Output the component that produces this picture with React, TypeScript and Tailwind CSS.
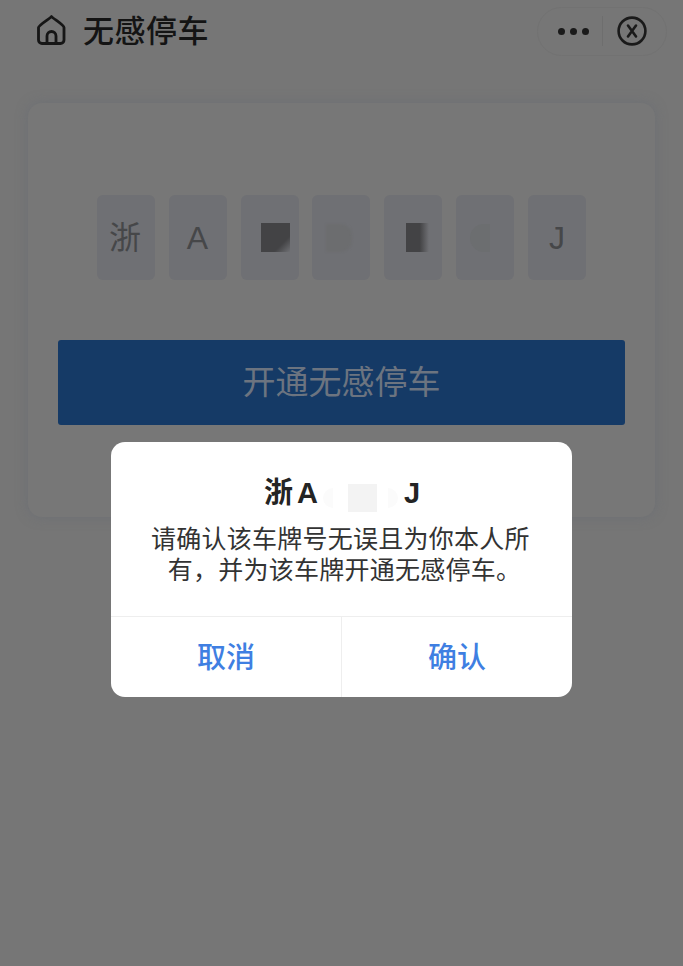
const font = '[font-family:"Liberation_Sans","Noto_Sans_CJK_SC",sans-serif]';

function Plate({ children }: { children: React.ReactNode }) {
  return (
    <div className="flex h-[85px] w-[58px] items-center justify-center rounded-md bg-[#6f7074] text-[32px] leading-none text-[#464749]">
      {children}
    </div>
  );
}

export default function App() {
  return (
    <div className={`relative h-[966px] w-[683px] overflow-hidden bg-[#767676] ${font}`}>
      <header className="flex h-[62px] items-center justify-between pl-[36px] pr-[16px]">
        <div className="flex items-center gap-[16px]">
          <svg width="31" height="32" viewBox="0 0 31 32" fill="none" stroke="#161616" strokeWidth="2.8" strokeLinejoin="round" strokeLinecap="round" className="mt-[-2px]">
            <path d="M15.5 2.5 C17 4.5 28 11 28 13.5 V26 a3.5 3.5 0 0 1 -3.5 3.5 H6 a3.5 3.5 0 0 1 -3.5 -3.5 V13.5 C2.5 11 14 4.5 15.5 2.5 Z" />
            <path d="M11 29.5 V22 a4.5 4.5 0 0 1 9 0 V29.5" />
          </svg>
          <span className="text-[31px] font-medium leading-none tracking-[0.5px] text-[#141414]">无感停车</span>
        </div>
        <div className="flex h-[49px] w-[130px] items-center rounded-full border border-[#727272] pl-[20px]">
          <div className="flex w-[44px] items-center gap-[5px] pr-[7px]">
            <span className="h-[7px] w-[7px] rounded-full bg-[#1a1a1a]" />
            <span className="h-[7px] w-[7px] rounded-full bg-[#1a1a1a]" />
            <span className="h-[7px] w-[7px] rounded-full bg-[#1a1a1a]" />
          </div>
          <div className="h-[30px] w-px bg-[#6e6e6e]" />
          <svg width="30" height="30" viewBox="0 0 30 30" fill="none" stroke="#1a1a1a" strokeLinecap="round" className="ml-[14px]">
            <circle cx="15" cy="15" r="13.4" strokeWidth="2.6" />
            <path d="M11 9.5 L19 20.5 M19 9.5 L11 20.5" strokeWidth="2.6" />
          </svg>
        </div>
      </header>

      <main className="mx-[28px] mt-[41px] h-[414px] rounded-[14px] bg-[#777777] shadow-[0_0_12px_rgba(100,105,115,0.5)] px-[30px] pt-[92px]">
        <div className="flex justify-between px-[39px]">
          <Plate><span className="mr-[2px]">浙</span></Plate>
          <Plate><span className="mr-[1px]">A</span></Plate>
          <Plate><span className="ml-[12px] h-[29px] w-[29px] bg-[linear-gradient(135deg,#434345_72%,#6f7074_100%)]" /></Plate>
          <Plate><span className="mr-[4px] h-[28px] w-[26px] rounded-r-xl bg-[#6c6d6f] blur-[1px]" /></Plate>
          <Plate><span className="ml-[8px] h-[29px] w-[23px] bg-[linear-gradient(90deg,#434345_60%,#6f7074_100%)]" /></Plate>
          <Plate><span className="mr-[11px] h-[28px] w-[20px] rounded-l-full bg-[#6c6e70]" /></Plate>
          <Plate>J</Plate>
        </div>
        <button className="mt-[60px] flex h-[85px] w-full items-center justify-center rounded-[3px] bg-[#153a66] text-[33px] leading-none text-[#6c7480]">
          开通无感停车
        </button>
      </main>

      <div className="absolute left-[111px] top-[442px] flex h-[255px] w-[461px] flex-col overflow-hidden rounded-[14px] bg-white">
        <div className="flex h-[174px] flex-col items-center pt-[33px]">
          <div className="flex h-[36px] items-center pl-[1px] text-[29px] font-bold leading-none text-[#242424]">
            <span>浙</span>
            <span className="ml-[4px]">A</span>
            <span className="mx-[3px] flex h-[28px] w-[80px] translate-y-[5px] items-center justify-center">
              <span className="h-[20px] w-[10px] rounded-l-full bg-[#fbfbfb]" />
              <span className="ml-[15px] mr-[11px] h-[28px] w-[29px] bg-[#f3f3f3]" />
              <span className="h-[20px] w-[10px] rounded-r-full bg-[#fbfbfb]" />
            </span>
            <span>J</span>
          </div>
          <p className="mt-[13px] w-[400px] text-center text-[25px] leading-[31px] tracking-[0.25px] text-[#333333]">
            <span className="block pr-[2px]">请确认该车牌号无误且为你本人所</span>
            <span className="block pl-[6px]">有，并为该车牌开通无感停车。</span>
          </p>
        </div>
        <div className="flex flex-1 border-t border-[#eeeeee]">
          <button className="flex flex-1 items-center justify-center pt-[3px] text-[29px] font-medium leading-none text-[#3f7fe2]">取消</button>
          <div className="w-px bg-[#eeeeee]" />
          <button className="flex flex-1 items-center justify-center pt-[3px] text-[29px] font-medium leading-none text-[#3f7fe2]">确认</button>
        </div>
      </div>
    </div>
  );
}
